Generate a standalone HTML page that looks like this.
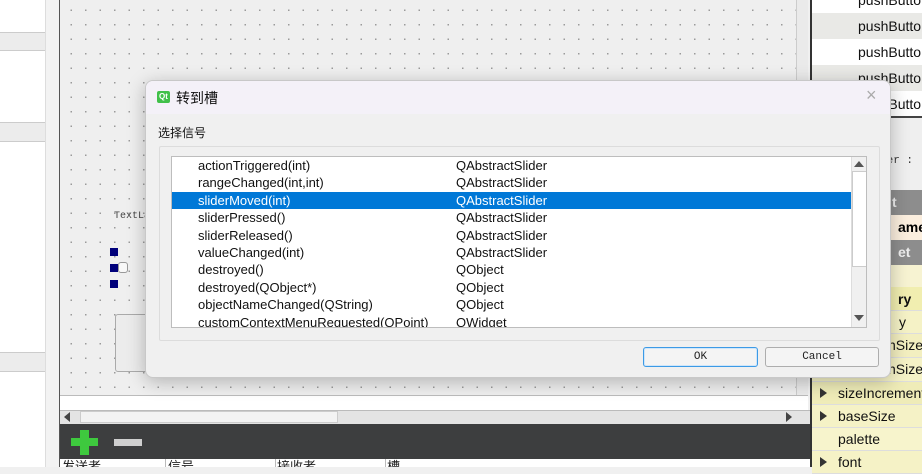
<!DOCTYPE html>
<html><head><meta charset="utf-8"><style>
*{margin:0;padding:0;box-sizing:border-box}
body{width:922px;height:467px;overflow:hidden;position:relative;background:#f0f0f0;font-family:"Liberation Sans","Noto Sans CJK SC",sans-serif}
.a{position:absolute}
.canvas{left:60px;top:0;width:748px;height:395px;background-color:#efefef;background-image:radial-gradient(circle,#9a9a9a 0.7px,transparent 1px);background-size:14.5px 14.5px;background-position:4px 3px}
.rrow{position:absolute;left:812px;width:110px;font-size:14px;color:#111;padding-left:46px;line-height:26px}
.prow{position:absolute;left:812px;width:110px;font-size:14px;color:#111;background:#f5f2c6;border-bottom:1px solid #ddd;line-height:22px;white-space:nowrap;overflow:hidden}
.tri{position:absolute;left:8px;top:6px;width:0;height:0;border-left:7px solid #333;border-top:5px solid transparent;border-bottom:5px solid transparent}
.item{position:absolute;left:0;width:679px;height:17.4px;font-size:13px;line-height:17px;color:#111}
.item span{position:absolute}
.item .c1{left:26px}.item .c2{left:284px}
.btn{position:absolute;height:20px;border:1px solid #adadad;border-radius:3px;background:#f4f4f4;font-family:"Liberation Mono",monospace;font-size:11px;text-align:center;line-height:18px;color:#222}
</style></head><body>
<div class="a" style="left:0;top:0;width:45px;height:467px;background:#fff"></div>
<div class="a" style="left:0;top:32px;width:45px;height:19px;background:#ececec;border-top:1px solid #ccc;border-bottom:1px solid #ccc"></div>
<div class="a" style="left:0;top:122px;width:45px;height:20px;background:#ececec;border-top:1px solid #ccc;border-bottom:1px solid #ccc"></div>
<div class="a" style="left:0;top:352px;width:45px;height:20px;background:#ececec;border-top:1px solid #ccc;border-bottom:1px solid #ccc"></div>
<div class="a" style="left:45px;top:0;width:14px;height:467px;background:#f3f3f3;border-left:1px solid #ddd"></div>
<div class="a" style="left:59px;top:0;width:1px;height:467px;background:#555"></div>
<div class="a canvas"></div>
<div class="a" style="left:114px;top:211px;font-family:'Liberation Mono',monospace;font-size:10px;color:#444">TextLa</div>
<div class="a" style="left:110px;top:248px;width:8px;height:8px;background:#00007a"></div>
<div class="a" style="left:110px;top:264px;width:8px;height:8px;background:#00007a"></div>
<div class="a" style="left:110px;top:280px;width:8px;height:8px;background:#00007a"></div>
<div class="a" style="left:118px;top:262px;width:10px;height:11px;background:#f8f8f8;border:1px solid #999;border-radius:3px"></div>
<div class="a" style="left:115px;top:314px;width:40px;height:58px;background:#ececec;border:1px solid #aaa;border-radius:3px"></div>
<div class="a" style="left:796px;top:0;width:12px;height:410px;background:#eaeaea;border-left:1px solid #ccc"></div>
<div class="a" style="left:797px;top:398px;border-top:6px solid #555;border-left:5px solid transparent;border-right:5px solid transparent"></div>
<div class="a" style="left:60px;top:395px;width:748px;height:15px;background:#fff;border-top:1px solid #bbb"></div>
<div class="a" style="left:60px;top:410px;width:750px;height:14px;background:#e4e4e4;border-top:1px solid #bbb"></div>
<div class="a" style="left:80px;top:411px;width:258px;height:12px;background:#f3f3f3;border:1px solid #ccc"></div>
<div class="a" style="left:64px;top:412px;border-right:6px solid #444;border-top:5px solid transparent;border-bottom:5px solid transparent"></div>
<div class="a" style="left:786px;top:412px;border-left:6px solid #444;border-top:5px solid transparent;border-bottom:5px solid transparent"></div>
<div class="a" style="left:60px;top:424px;width:752px;height:35px;background:#3d3e3f"></div>
<div class="a" style="left:71px;top:438px;width:27px;height:8px;background:#3ec93e"></div>
<div class="a" style="left:80px;top:430px;width:9px;height:25px;background:#3ec93e"></div>
<div class="a" style="left:114px;top:439px;width:28px;height:7px;background:#cfcfcf"></div>
<div class="a" style="left:60px;top:459px;width:752px;height:8px;background:#fff;overflow:hidden">
<div class="a" style="left:2px;top:1px;font-size:13px;color:#222;line-height:14px;white-space:nowrap">发送者<span style="position:absolute;left:106px">信号</span><span style="position:absolute;left:215px">接收者</span><span style="position:absolute;left:325px">槽</span></div>
<div class="a" style="left:105px;top:0;width:1px;height:8px;background:#bbb"></div>
<div class="a" style="left:215px;top:0;width:1px;height:8px;background:#bbb"></div>
<div class="a" style="left:325px;top:0;width:1px;height:8px;background:#bbb"></div>
</div>
<div class="a" style="left:810px;top:0;width:112px;height:467px;background:#fff;border-left:2px solid #333"></div>
<div class="rrow" style="top:-13px;background:#fff">pushButto</div>
<div class="rrow" style="top:13px;background:#e9e9e6">pushButto</div>
<div class="rrow" style="top:39px;background:#fff">pushButto</div>
<div class="rrow" style="top:65px;background:#e9e9e6">pushButto</div>
<div class="rrow" style="top:91px;background:#fff">pushButto</div>
<div class="a" style="left:812px;top:116px;width:110px;height:2px;background:#444"></div>
<div class="a" style="left:812px;top:118px;width:110px;height:72px;background:#efefef"></div>
<div class="a" style="left:880px;top:155px;font-family:'Liberation Mono',monospace;font-size:11px;color:#333">der :</div>
<div class="a" style="left:812px;top:190px;width:110px;height:25px;background:#8d8d8d;color:#eee;font-weight:bold;font-size:14px;padding-left:80px;line-height:25px">t</div>
<div class="a" style="left:812px;top:215px;width:110px;height:25px;background:#fbeede;font-weight:bold;font-size:14px;padding-left:86px;line-height:25px">ame</div>
<div class="a" style="left:812px;top:240px;width:110px;height:25px;background:#8d8d8d;color:#eee;font-weight:bold;font-size:14px;padding-left:86px;line-height:25px">et</div>
<div class="a" style="left:812px;top:265px;width:110px;height:22px;background:#f7f3d2"></div>
<div class="prow" style="top:287px;height:24px;font-weight:bold;padding-left:86px;line-height:24px;background:#f1eeb0">ry</div>
<div class="prow" style="top:311px;height:23px;padding-left:87px">y</div>
<div class="prow" style="top:334px;height:24px;padding-left:76px;background:#f3efc0">nSize</div>
<div class="prow" style="top:358px;height:24px;padding-left:76px">nSize</div>
<div class="prow" style="top:382px;height:23px;padding-left:26px;background:#efecb8"><div class="tri"></div>sizeIncrement</div>
<div class="prow" style="top:405px;height:23px;padding-left:26px"><div class="tri"></div>baseSize</div>
<div class="prow" style="top:428px;height:23px;padding-left:26px;background:#f7f4cc">palette</div>
<div class="prow" style="top:451px;height:23px;padding-left:26px"><div class="tri"></div>font</div>
<div class="a" style="left:145px;top:80px;width:746px;height:298px;background:#f0f0f0;border:1px solid #c8c8c8;border-radius:8px;box-shadow:0 4px 18px rgba(0,0,0,.25);overflow:hidden">
 <div class="a" style="left:0;top:0;width:746px;height:33px;background:#f4f1f8"></div>
 <div class="a" style="left:11px;top:10px;width:13px;height:12px;background:#41c04a;border-radius:2px;color:#fff;font-size:8px;line-height:12px;text-align:center;font-weight:bold">Qt</div>
 <div class="a" style="left:30px;top:7px;font-size:14px;color:#111">转到槽</div>
 <div class="a" style="left:720px;top:4px;font-size:18px;color:#aaa">×</div>
 <div class="a" style="left:12px;top:43px;font-size:12px;color:#111">选择信号</div>
 <div class="a" style="left:13px;top:65px;width:721px;height:195px;border:1px solid #dcdcdc;border-radius:2px"></div>
 <div class="a" style="left:25px;top:75px;width:696px;height:172px;background:#fff;border:1px solid #bdbdbd;overflow:hidden">
  <div class="item" style="top:0px"><span class="c1">actionTriggered(int)</span><span class="c2">QAbstractSlider</span></div>
  <div class="item" style="top:17.4px"><span class="c1">rangeChanged(int,int)</span><span class="c2">QAbstractSlider</span></div>
  <div class="item" style="top:34.8px;background:#0078d7;color:#fff"><span class="c1">sliderMoved(int)</span><span class="c2">QAbstractSlider</span></div>
  <div class="item" style="top:52.2px"><span class="c1">sliderPressed()</span><span class="c2">QAbstractSlider</span></div>
  <div class="item" style="top:69.6px"><span class="c1">sliderReleased()</span><span class="c2">QAbstractSlider</span></div>
  <div class="item" style="top:87px"><span class="c1">valueChanged(int)</span><span class="c2">QAbstractSlider</span></div>
  <div class="item" style="top:104.4px"><span class="c1">destroyed()</span><span class="c2">QObject</span></div>
  <div class="item" style="top:121.8px"><span class="c1">destroyed(QObject*)</span><span class="c2">QObject</span></div>
  <div class="item" style="top:139.2px"><span class="c1">objectNameChanged(QString)</span><span class="c2">QObject</span></div>
  <div class="item" style="top:156.6px"><span class="c1">customContextMenuRequested(QPoint)</span><span class="c2">QWidget</span></div>
  <div class="a" style="left:679px;top:0;width:16px;height:171px;background:#f0f0f0;border-left:1px solid #ddd"></div>
  <div class="a" style="left:680px;top:14px;width:15px;height:96px;background:#fff;border:1px solid #ccc"></div>
  <div class="a" style="left:682px;top:4px;border-bottom:6px solid #555;border-left:5px solid transparent;border-right:5px solid transparent"></div>
  <div class="a" style="left:682px;top:158px;border-top:6px solid #555;border-left:5px solid transparent;border-right:5px solid transparent"></div>
 </div>
 <div class="btn" style="left:497px;top:266px;width:115px;border-color:#3c9ae6;box-shadow:inset 0 0 0 1px #cfe6fa">OK</div>
 <div class="btn" style="left:619px;top:266px;width:114px">Cancel</div>
</div>
</body></html>
